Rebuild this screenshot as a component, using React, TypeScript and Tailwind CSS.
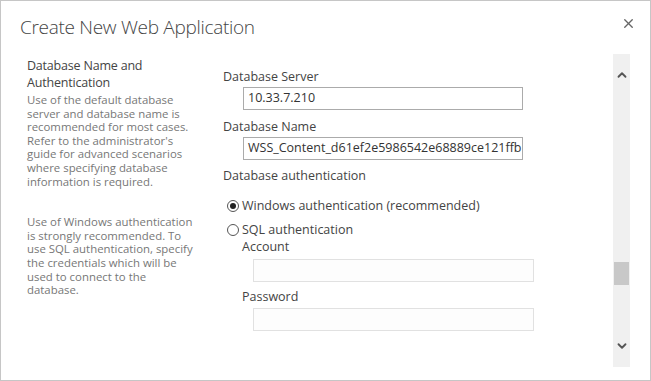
import { X, ChevronUp, ChevronDown } from 'lucide-react';

const font = { fontFamily: '"Open Sans", "Noto Sans", sans-serif' };

const ajuda1 = [
  'Use of the default database',
  'server and database name is',
  'recommended for most cases.',
  "Refer to the administrator's",
  'guide for advanced scenarios',
  'where specifying database',
  'information is required.',
];

const ajuda2 = [
  'Use of Windows authentication',
  'is strongly recommended. To',
  'use SQL authentication, specify',
  'the credentials which will be',
  'used to connect to the',
  'database.',
];

function Radio({ checked }: { checked?: boolean }) {
  return (
    <span className="w-[12px] h-[12px] rounded-full border border-[#555] bg-white flex items-center justify-center shrink-0">
      {checked && <span className="w-[6px] h-[6px] rounded-full bg-[#222]" />}
    </span>
  );
}

export default function App() {
  return (
    <div className="w-[651px] h-[381px] bg-white border border-[#c6c6c6] flex flex-col text-[#444]" style={font}>
      {/* Cabeçalho */}
      <div className="h-[53px] flex items-start justify-between pl-[19px] pr-[14px] pt-[12px]">
        <h1 className="text-[19px] font-light leading-[28px] text-[#444] tracking-[-0.3px]">Create New Web Application</h1>
        <X className="w-[15px] h-[15px] text-[#666] mt-[3px]" strokeWidth={2.2} />
      </div>

      <div className="flex h-[314px]">
        {/* Coluna da esquerda */}
        <div className="w-[195px] pl-[26px] pr-[4px] pt-[3px]">
          <div className="text-[12.5px] leading-[17px] text-[#444] tracking-[-0.2px]">Database Name and<br />Authentication</div>
          <div className="text-[11.4px] leading-[13.6px] text-[#777] mt-[2px] whitespace-nowrap">
            {ajuda1.map((l) => <div key={l}>{l}</div>)}
          </div>
          <div className="text-[11.4px] leading-[13.6px] text-[#777] mt-[27px] whitespace-nowrap">
            {ajuda2.map((l) => <div key={l}>{l}</div>)}
          </div>
        </div>

        {/* Coluna da direita */}
        <div className="w-[417px] pl-[27px] pt-[14px] text-[12.5px] text-[#444]">
          <div className="leading-[17px]">Database Server</div>
          <div className="ml-[20px] mt-[2px] w-[280px] h-[23px] border border-[#ababab] flex items-center px-[4px] text-[#333]">10.33.7.210</div>
          <div className="leading-[17px] mt-[8px]">Database Name</div>
          <div className="ml-[20px] mt-[2px] w-[280px] h-[23px] border border-[#ababab] flex items-center px-[4px] text-[#333] overflow-hidden whitespace-nowrap">WSS_Content_d61ef2e5986542e68889ce121ffb</div>
          <div className="leading-[17px] mt-[7px]">Database authentication</div>

          <div className="mt-[13px] ml-[4px] flex items-center gap-[3px] leading-[17px]">
            <Radio checked />
            <span>Windows authentication (recommended)</span>
          </div>
          <div className="mt-[7px] ml-[4px] flex items-center gap-[3px] leading-[17px]">
            <Radio />
            <span>SQL authentication</span>
          </div>
          <div className="ml-[19px]">
            <div className="leading-[17px]">Account</div>
            <div className="ml-[11px] mt-[4px] w-[281px] h-[23px] border border-[#e1e1e1] bg-[#fdfdfd]" />
            <div className="leading-[17px] mt-[6px]">Password</div>
            <div className="ml-[11px] mt-[3px] w-[281px] h-[23px] border border-[#e1e1e1] bg-[#fdfdfd]" />
          </div>
        </div>

        {/* Barra de rolagem */}
        <div className="w-[17px] h-[313px] bg-[#f0f0f0] flex flex-col items-center">
          <ChevronUp className="w-[14px] h-[14px] text-[#555] mt-[14px]" strokeWidth={3.2} />
          <div className="w-[15px] h-[23px] bg-[#c8c8c8] mt-[180px]" />
          <div className="flex-1" />
          <ChevronDown className="w-[14px] h-[14px] text-[#555] mb-[14px]" strokeWidth={3.2} />
        </div>
      </div>
    </div>
  );
}
